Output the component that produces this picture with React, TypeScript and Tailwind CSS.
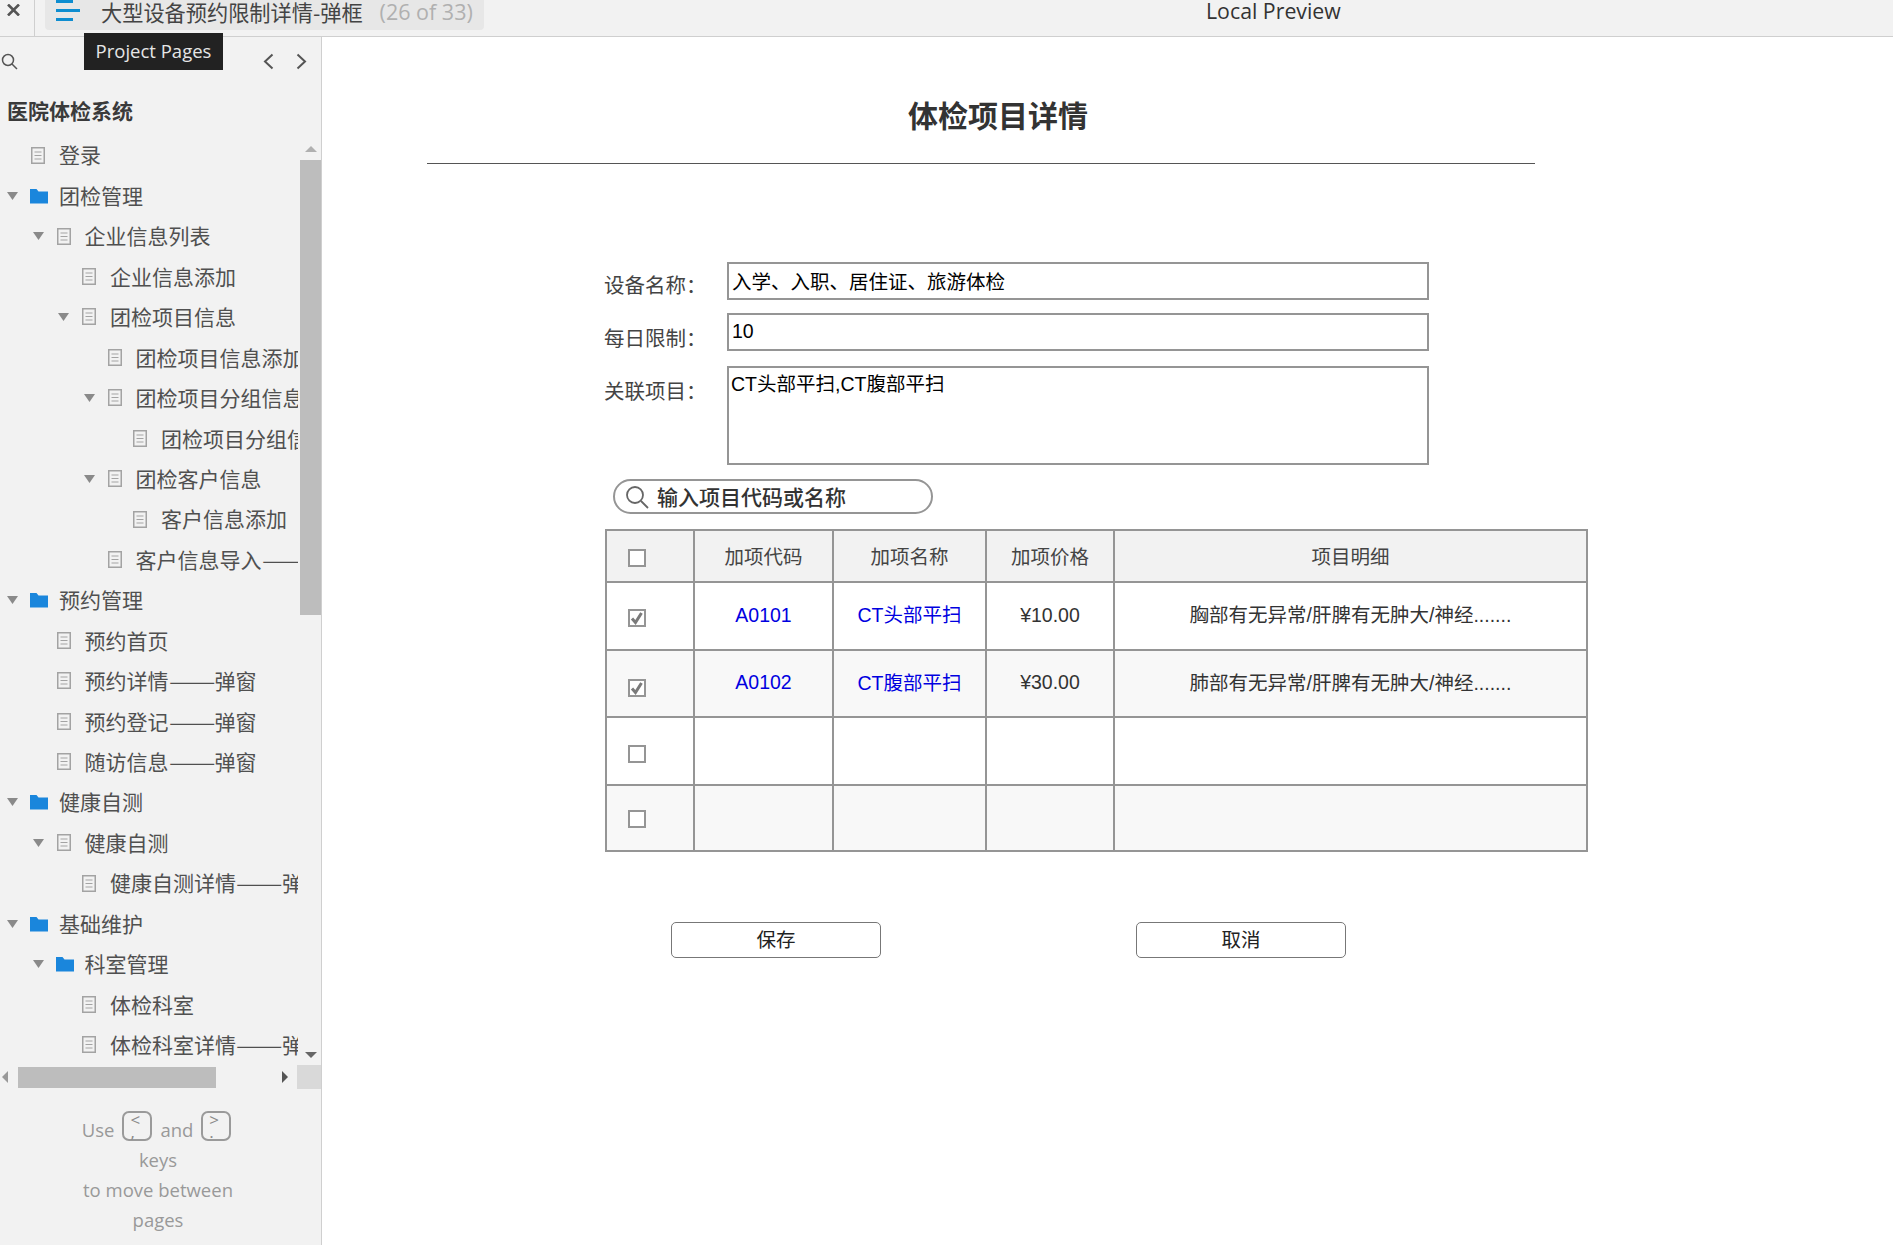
const cn = '[font-family:"Noto_Sans_CJK_SC","Open_Sans",sans-serif]'

type TreeItem = { label: string; level: number; folder?: boolean; open?: boolean }

const tree: TreeItem[] = [
  { label: '登录', level: 0 },
  { label: '团检管理', level: 0, folder: true, open: true },
  { label: '企业信息列表', level: 1, open: true },
  { label: '企业信息添加', level: 2 },
  { label: '团检项目信息', level: 2, open: true },
  { label: '团检项目信息添加', level: 3 },
  { label: '团检项目分组信息', level: 3, open: true },
  { label: '团检项目分组信息添加', level: 4 },
  { label: '团检客户信息', level: 3, open: true },
  { label: '客户信息添加', level: 4 },
  { label: '客户信息导入——弹窗', level: 3 },
  { label: '预约管理', level: 0, folder: true, open: true },
  { label: '预约首页', level: 1 },
  { label: '预约详情——弹窗', level: 1 },
  { label: '预约登记——弹窗', level: 1 },
  { label: '随访信息——弹窗', level: 1 },
  { label: '健康自测', level: 0, folder: true, open: true },
  { label: '健康自测', level: 1, open: true },
  { label: '健康自测详情——弹窗', level: 2 },
  { label: '基础维护', level: 0, folder: true, open: true },
  { label: '科室管理', level: 1, folder: true, open: true },
  { label: '体检科室', level: 2 },
  { label: '体检科室详情——弹窗', level: 2 },
]

const rows = [
  { checked: true, code: 'A0101', name: 'CT头部平扫', price: '¥10.00', detail: '胸部有无异常/肝脾有无肿大/神经.......', bg: 'bg-white', h: 'h-[68px]', pt: 'pt-[4px]' },
  { checked: true, code: 'A0102', name: 'CT腹部平扫', price: '¥30.00', detail: '肺部有无异常/肝脾有无肿大/神经.......', bg: 'bg-[#f8f8f8]', h: 'h-[67px]', pt: 'pt-[8px]' },
  { checked: false, code: '', name: '', price: '', detail: '', bg: 'bg-white', h: 'h-[68px]', pt: 'pt-[5px]' },
  { checked: false, code: '', name: '', price: '', detail: '', bg: 'bg-[#f8f8f8]', h: 'h-[66px]', pt: 'pt-[2px]' },
]

function DocIcon() {
  return (
    <svg width="14" height="17" viewBox="0 0 14 17" fill="none" stroke="#a3a3a3">
      <rect x="0.75" y="0.75" width="12.5" height="15.5" strokeWidth="1.5" fill="#f2f2f2" />
      <path d="M3.5 5h7M3.5 8.5h7M3.5 12h7" strokeWidth="1.2" />
    </svg>
  )
}

function FolderIcon() {
  return (
    <svg width="18" height="16" viewBox="0 0 18 16" fill="#1a86dc" className="-ml-[1px]">
      <path d="M0 1h6.5l2 2.5H18V15.500H0z" />
    </svg>
  )
}

function Caret() {
  return (
    <svg width="11" height="8" viewBox="0 0 11 8" fill="#8a8a8a">
      <path d="M0 0h11L5.500 8z" />
    </svg>
  )
}

// the CJK font's em dash is narrower than the one in the picture, so it gets stretched
function TreeLabel({ text }: { text: string }) {
  const parts = text.split('——')
  if (parts.length < 2) return <span>{text}</span>
  return (
    <span className="flex">
      <span>{parts[0]}</span>
      <span className="w-[46px] inline-block origin-left scale-x-[1.32] overflow-visible">——</span>
      <span>{parts[1]}</span>
    </span>
  )
}

function Tree() {
  return (
    <div className="w-[298px] h-[930px] overflow-hidden">
      {tree.map((item, i) => (
        <div key={i} className="h-[40.45px] flex items-center whitespace-nowrap text-[21px] text-[#505050]" style={{ paddingLeft: 7 + item.level * 25.5 }}>
          <span className="w-[24px] shrink-0 flex items-center">{item.open && <Caret />}</span>
          <span className="w-[28px] shrink-0 flex items-center">{item.folder ? <FolderIcon /> : <DocIcon />}</span>
          <TreeLabel text={item.label} />
        </div>
      ))}
    </div>
  )
}

function Checkbox({ checked }: { checked: boolean }) {
  return (
    <span className="w-[18px] h-[18px] border-2 border-[#959595] bg-white flex items-center justify-center">
      {checked && (
        <svg width="14" height="14" viewBox="0 0 14 14" fill="none" stroke="#7a7a7a" strokeWidth="3">
          <path d="M2 7.500l3.500 4L11.500 2" />
        </svg>
      )}
    </span>
  )
}

function Key({ top, bottom }: { top: string; bottom: string }) {
  return (
    <span className="w-[30px] h-[30px] -mt-[8px] border-2 border-[#9a9a9a] rounded-[7px] flex flex-col items-start pl-[6px] text-[17px] leading-[12px] pt-[1px] text-[#8a8a8a]">
      <span>{top}</span>
      <span>{bottom}</span>
    </span>
  )
}

export default function App() {
  return (
    <div className={`relative w-[1893px] h-[1245px] flex flex-col bg-white overflow-hidden ${cn}`}>
      {/* Top bar */}
      <header className="h-[37px] shrink-0 flex bg-[#f2f2f2] border-b border-[#cfcfcf]">
        <div className="w-[35px] shrink-0 border-r border-[#cfcfcf] h-full pl-[7px] pt-[4px]">
          <svg width="13" height="12" viewBox="0 0 13 12" stroke="#555" strokeWidth="2.600" fill="none">
            <path d="M1 0.500l11 11M12 0.500l-11 11" />
          </svg>
        </div>
        <div className="ml-[10px] w-[439px] h-[30px] bg-[#e7e7e7] rounded-b-[4px] flex items-center overflow-hidden">
          <svg width="24" height="21" viewBox="0 0 24 21" fill="#0e8dd0" className="ml-[11px] -mt-[9px] shrink-0">
            <rect x="0" y="0" width="17" height="3" />
            <rect x="0" y="9" width="24" height="3" />
            <rect x="0" y="18" width="17" height="3" />
          </svg>
          <span className="ml-[21px] text-[21.200px] text-[#444] -mt-[7px] whitespace-nowrap">大型设备预约限制详情-弹框</span>
          <span className="ml-[17px] text-[21.500px] text-[#b0b0b0] -mt-[5px] whitespace-nowrap [font-family:'Open_Sans',sans-serif]">(26 of 33)</span>
        </div>
        <div className="ml-[722px] text-[21.300px] text-[#333] -mt-[5px] whitespace-nowrap [font-family:'Open_Sans',sans-serif]">Local Preview</div>
      </header>

      <div className="flex-1 flex min-h-0">
        {/* Sidebar */}
        <aside className="w-[322px] shrink-0 bg-[#f2f2f2] border-r border-[#cfcfcf] flex flex-col">
          <div className="h-[50px] shrink-0 flex items-center">
            <svg width="17" height="17" viewBox="0 0 17 17" fill="none" stroke="#555" strokeWidth="1.500" className="ml-[1px] -mt-[2px]">
              <circle cx="7" cy="7" r="5.500" />
              <path d="M11 11l5 5" />
            </svg>
            <svg width="11" height="17" viewBox="0 0 11 17" fill="none" stroke="#555" strokeWidth="2" className="ml-[245px] -mt-[2px]">
              <path d="M9.500 1.500L2 8.500l7.500 7" />
            </svg>
            <svg width="11" height="17" viewBox="0 0 11 17" fill="none" stroke="#555" strokeWidth="2" className="ml-[22px] -mt-[2px]">
              <path d="M1.500 1.500L9 8.500l-7.500 7" />
            </svg>
          </div>
          <div className="h-[48px] shrink-0 pl-[7px] text-[21px] font-bold text-[#3a3a3a] leading-[47px]">医院体检系统</div>
          <div className="flex h-[930px] shrink-0">
            <Tree />
            <div className="ml-[2px] w-[21px] flex flex-col items-center">
              <div className="h-[25px] flex items-center justify-center pt-[2px]">
                <div className="w-0 h-0 border-x-[6px] border-x-transparent border-b-[6px] border-b-[#b0b0b0]" />
              </div>
              <div className="w-full h-[455px] bg-[#bdbdbd]" />
              <div className="mt-auto h-[20px] flex items-center">
                <div className="w-0 h-0 border-x-[6px] border-x-transparent border-t-[6px] border-t-[#666]" />
              </div>
            </div>
          </div>
          <div className="h-[24px] shrink-0 flex items-center">
            <div className="w-0 h-0 ml-[2px] border-y-[6px] border-y-transparent border-r-[6px] border-r-[#999]" />
            <div className="ml-[10px] w-[198px] h-[21px] bg-[#bdbdbd]" />
            <div className="ml-[66px] w-0 h-0 border-y-[6px] border-y-transparent border-l-[6px] border-l-[#555]" />
            <div className="ml-[9px] flex-1 h-[24px] bg-[#d9d9d9]" />
          </div>
          <div className="pt-[26px] w-[316px] text-center text-[18.500px] leading-[30px] text-[#999] [font-family:'Open_Sans',sans-serif]">
            <div className="-ml-[3px] flex items-center justify-center gap-[8px]">
              <span>Use</span>
              <Key top="<" bottom="," />
              <span>and</span>
              <Key top=">" bottom="." />
            </div>
            <div>keys</div>
            <div>to move between</div>
            <div>pages</div>
          </div>
        </aside>

        {/* Detail page */}
        <main className="flex-1 flex flex-col">
          <div className="ml-[105px] w-[1108px]">
            <h1 className="pt-[57px] pl-[34px] text-center text-[30px] leading-[40px] font-bold text-[#333]">体检项目详情</h1>
            <div className="mt-[29px] h-[1px] bg-[#555]" />
          </div>

          <div className="mt-[98px] ml-[282px] w-[984px]">
            <div className="flex h-[38px] text-[20.500px] text-[#444]">
              <label className="w-[123px] pt-[3px] leading-[38px]">设备名称：</label>
              <input readOnly value="入学、入职、居住证、旅游体检" className="w-[702px] h-[38px] border-2 border-[#959595] px-[3px] pb-[2px] text-[19.500px] text-black outline-none" />
            </div>
            <div className="mt-[13px] flex h-[38px] text-[20.500px] text-[#444]">
              <label className="w-[123px] pt-[5px] leading-[38px]">每日限制：</label>
              <input readOnly value="10" className="w-[702px] h-[38px] border-2 border-[#959595] px-[3px] pb-[2px] text-[19.500px] text-black outline-none [font-family:'Liberation_Sans',sans-serif]" />
            </div>
            <div className="mt-[15px] flex h-[99px] text-[20.500px] text-[#444]">
              <label className="w-[123px] pt-[5px] leading-[38px]">关联项目：</label>
              <textarea readOnly value="CT头部平扫,CT腹部平扫" className="w-[702px] h-[99px] border-2 border-[#959595] px-[2px] py-[3px] resize-none text-[19.500px] leading-[26px] text-black outline-none [font-family:'Liberation_Sans','Noto_Sans_CJK_SC',sans-serif]" />
            </div>

            <div className="mt-[14px] ml-[9px] w-[320px] h-[35px] rounded-full border-2 border-[#959595] flex items-center">
              <svg width="24" height="24" viewBox="0 0 24 24" fill="none" stroke="#666" strokeWidth="1.800" className="ml-[10px]">
                <circle cx="10" cy="10" r="8" />
                <path d="M16 16l7 7" />
              </svg>
              <span className="ml-[8px] text-[21px] font-medium text-[#333]">输入项目代码或名称</span>
            </div>

            <table className="mt-[15px] ml-[1px] w-[983px] table-fixed border-collapse text-[19.500px] text-[#444]">
              <colgroup>
                <col className="w-[88px]" />
                <col className="w-[139px]" />
                <col className="w-[153px]" />
                <col className="w-[128px]" />
                <col />
              </colgroup>
              <thead>
                <tr className="h-[52px] bg-[#f2f2f2]">
                  <th className="border-2 border-[#959595] pl-[21px] pt-[4px] font-normal">
                    <Checkbox checked={false} />
                  </th>
                  <th className="border-2 border-[#959595] font-normal">加项代码</th>
                  <th className="border-2 border-[#959595] font-normal">加项名称</th>
                  <th className="border-2 border-[#959595] font-normal">加项价格</th>
                  <th className="border-2 border-[#959595] font-normal">项目明细</th>
                </tr>
              </thead>
              <tbody>
                {rows.map((row, i) => (
                  <tr key={i} className={`${row.h} ${row.bg}`}>
                    <td className={`border-2 border-[#959595] pl-[21px] ${row.pt}`}>
                      <Checkbox checked={row.checked} />
                    </td>
                    <td className="border-2 border-[#959595] text-center text-[#0000e0] [font-family:'Liberation_Sans',sans-serif] pb-[1px]">{row.code}</td>
                    <td className="border-2 border-[#959595] text-center text-[#0000e0] [font-family:'Liberation_Sans','Noto_Sans_CJK_SC',sans-serif]">{row.name}</td>
                    <td className="border-2 border-[#959595] text-center text-[#333] [font-family:'Liberation_Sans',sans-serif] pb-[1px]">{row.price}</td>
                    <td className="border-2 border-[#959595] text-center text-[#333] [font-family:'Liberation_Sans','Noto_Sans_CJK_SC',sans-serif]">{row.detail}</td>
                  </tr>
                ))}
              </tbody>
            </table>

            <div className="mt-[70px] ml-[67px] flex gap-[255px]">
              <button className="w-[210px] h-[36px] border border-[#777] rounded-[5px] pb-[2px] text-[19.500px] text-[#222]">保存</button>
              <button className="w-[210px] h-[36px] border border-[#777] rounded-[5px] pb-[2px] text-[19.500px] text-[#222]">取消</button>
            </div>
          </div>
        </main>
      </div>

      {/* Tooltip over the sidebar */}
      <div className="absolute left-[84px] top-[33px] w-[139px] h-[37px] pb-[2px] bg-[#222] text-[#e6e6e6] text-[18.500px] flex items-center justify-center [font-family:'Open_Sans',sans-serif]">
        Project Pages
      </div>
    </div>
  )
}
